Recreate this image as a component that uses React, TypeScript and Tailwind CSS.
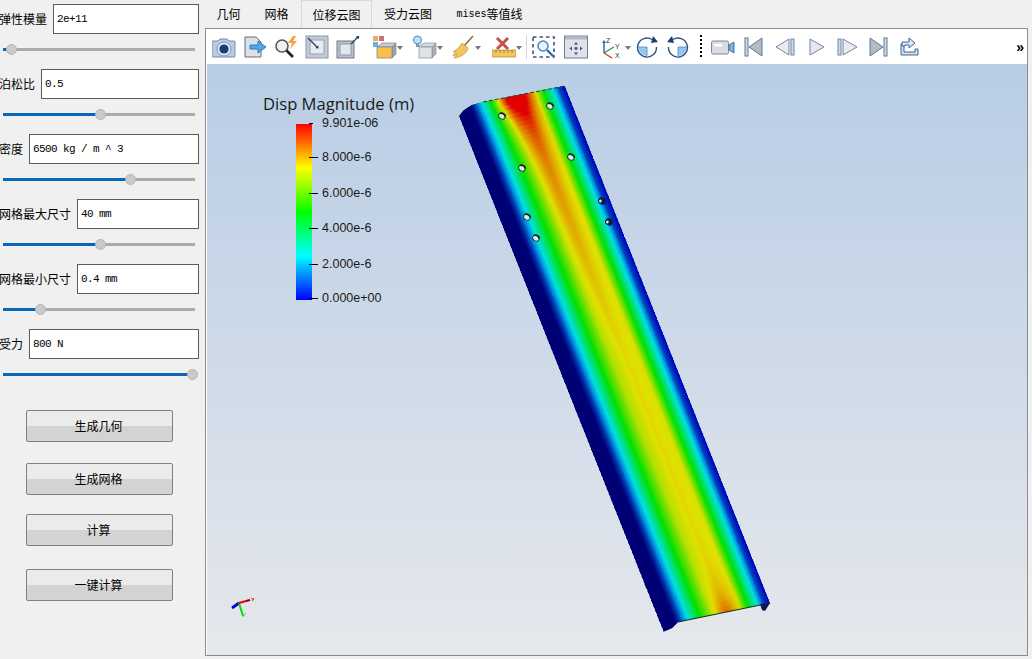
import type { ReactNode } from 'react';

const params = [
  { label: '弹性模量', value: '2e+11', pos: 8.5 },
  { label: '泊松比', value: '0.5', pos: 97 },
  { label: '密度', value: '6500 kg / m ^ 3', pos: 127 },
  { label: '网格最大尺寸', value: '40 mm', pos: 97 },
  { label: '网格最小尺寸', value: '0.4 mm', pos: 37.5 },
  { label: '受力', value: '800 N', pos: 189.5 },
];

const legendTicks = [
  { label: '9.901e-06', y: 59, tick: 'w-[4px]' },
  { label: '8.000e-6', y: 93, tick: 'w-[9px]' },
  { label: '6.000e-6', y: 129, tick: 'w-[9px]' },
  { label: '4.000e-6', y: 164, tick: 'w-[9px]' },
  { label: '2.000e-6', y: 200, tick: 'w-[9px]' },
  { label: '0.000e+00', y: 234, tick: 'w-[9px]' },
];

const holes = [
  { x: 502, y: 116, dark: false },
  { x: 550, y: 106, dark: false },
  { x: 522, y: 168, dark: false },
  { x: 571, y: 157, dark: false },
  { x: 527, y: 217, dark: false },
  { x: 536, y: 238, dark: false },
  { x: 602, y: 201, dark: true },
  { x: 609, y: 222, dark: true },
];

// value across the beam width, t = 0 left edge .. 1 right edge
const profile: [number, number][] = [
  [0, 0], [0.13, 0], [0.2, 0.14], [0.26, 0.27], [0.36, 0.5], [0.48, 0.7], [0.6, 0.76], [0.72, 0.74],
  [0.8, 0.5], [0.89, 0.25], [0.95, 0.08], [1, 0],
];

const lerpProfile = (t: number) => {
  for (let i = 1; i < profile.length; i++) {
    if (t <= profile[i][0]) {
      const [a, va] = profile[i - 1];
      const [b, vb] = profile[i];
      return va + ((t - a) / (b - a)) * (vb - va);
    }
  }
  return 0;
};

const rainbow = (f: number): [number, number, number] => {
  const v = Math.min(1, Math.max(0, f)) * 4;
  if (v < 1) return [0, v * 255, 255];
  if (v < 2) return [0, 255, (2 - v) * 255];
  if (v < 3) return [(v - 2) * 255, 255, 0];
  return [255, (4 - v) * 255, 0];
};

const beamColor = (t: number, v: number) => {
  const d = Math.max(v, 0);
  const top = Math.exp(-(((t - 0.5) / 0.15) ** 2)) * Math.exp(-d / 0.05);
  const bottom = Math.exp(-(((t - 0.6) / (0.06 + (1 - Math.min(v, 1)) * 0.9 + 0.03)) ** 2)) * Math.exp(-(1 - Math.min(v, 1)) / 0.035);
  const ridge = Math.exp(-(((t - 0.6 + d * 0.1) / 0.09) ** 2)) * Math.max(0, 0.5 - v) * 0.22;
  const base = lerpProfile(t);
  const f = base + ridge + (base > 0.1 ? 0.34 * top + 0.15 * bottom : 0);
  let shade = 0.88;
  if (t < 0.13) shade = 0.46;
  else if (t < 0.2) shade = 0.46 + ((t - 0.13) / 0.07) * 0.36;
  else if (t > 0.93) shade = 0.74;
  const [r, g, b] = rainbow(f);
  return `rgb(${Math.round(r * shade)},${Math.round(g * shade)},${Math.round(b * shade)})`;
};

const COLS = 90;
const ROWS = 120;
const beamCells: { d: string; fill: string }[] = [];
for (let j = 0; j < ROWS; j++) {
  for (let i = 0; i < COLS; i++) {
    const u0 = i / COLS;
    const u1 = (i + 1) / COLS;
    const v0 = -0.03 + (j / ROWS) * 1.04;
    const v1 = -0.03 + ((j + 1) / ROWS) * 1.04;
    const p = (u: number, v: number) =>
      `${(459 + u * 106 + v * 205).toFixed(1)} ${(116 - u * 29 + v * 516).toFixed(1)}`;
    beamCells.push({
      d: `M${p(u0, v0)}L${p(u1, v0)}L${p(u1, v1)}L${p(u0, v1)}Z`,
      fill: beamColor((u0 + u1) / 2, (v0 + v1) / 2),
    });
  }
}

const Ico = ({ className, children }: { className: string; children: ReactNode }) => (
  <svg width={24} height={24} viewBox="0 0 24 24" className={`shrink-0 ${className}`}>
    {children}
  </svg>
);

const Caret = () => (
  <svg width={6} height={4} viewBox="0 0 6 4" className="mt-[2px] shrink-0">
    <path d="M0 0H6L3 4Z" fill="#777" />
  </svg>
);

const Beam = () => (
  <svg viewBox="207 64 820 591" className="absolute inset-0 h-full w-full">
    <defs>
      <clipPath id="beamOutline">
        <path d="M459 116 464 110 472 105 483 102 565 86 770 603 678 622 672 628 663 632Z" />
      </clipPath>
    </defs>
    <g clipPath="url(#beamOutline)" shapeRendering="crispEdges">
      {beamCells.map((c, i) => (
        <path key={i} d={c.d} fill={c.fill} stroke={c.fill} strokeWidth={0.5} />
      ))}
    </g>
    <path d="M483 102 565 86" stroke="#1c2c40" strokeWidth={0.9} strokeDasharray="4 2" fill="none" />
    <path d="M678 622 770 603" stroke="#15301f" strokeWidth={1.2} fill="none" />
    <path d="M760 604 770 603 765 611 762 610Z" fill="#0a1a50" />
    {holes.map((h, i) => (
      <g key={i} transform={`rotate(30 ${h.x} ${h.y})`}>
        <ellipse cx={h.x} cy={h.y} rx={3.4} ry={3} fill={h.dark ? '#0a1a50' : '#dfe8ee'} stroke={h.dark ? '#0a1840' : '#16402c'} strokeWidth={1} />
        <path d={`M${h.x - 3} ${h.y - 1}A3.4 3 0 0 1 ${h.x + 3} ${h.y - 1}`} fill="none" stroke="#0c2a20" strokeWidth={1.6} />
        {h.dark && <ellipse cx={h.x - 1.4} cy={h.y + 0.8} rx={1.3} ry={1.5} fill="#dfe8f0" />}
      </g>
    ))}
    {/* axes widget */}
    <path d="M239 603 232 608" stroke="#0000e0" strokeWidth={2.8} />
    <path d="M239 603 243 616" stroke="#00e000" strokeWidth={2} />
    <path d="M239 603 246 601" stroke="#f00000" strokeWidth={2} />
    <path d="M246 601 250 600" stroke="#900000" strokeWidth={2.2} />
    <path d="M251 598 254 600M254 598 252 601" stroke="#f03030" strokeWidth={1} />
    <path d="M243 617 246 613" stroke="#30d030" strokeWidth={0.8} />
  </svg>
);

const Slider = ({ pos }: { pos: number }) => (
  <div className="flex h-[30px] items-center pl-[3px] pr-[10px]">
    <div className="relative h-[3px] w-full bg-[#ababab]">
      <div className="h-full bg-[#0a66b8]" style={{ width: pos }} />
      <div
        className="absolute top-[-4px] h-[11px] w-[11px] rounded-full border border-[#b4b4b4] bg-[#cacaca]"
        style={{ left: pos - 5.5 }}
      />
    </div>
  </div>
);

const ParamRow = ({ label, value, pos }: { label: string; value: string; pos: number }) => (
  <div className="mb-[5px]">
    <div className="ml-[-1px] mr-[6px] flex h-[30px] items-center gap-[6px]">
      <span className="whitespace-nowrap text-[12px] leading-none text-black">{label}</span>
      <input
        readOnly
        defaultValue={value}
        className="h-[30px] w-0 flex-1 border border-[#5a5a5a] bg-white px-[3px] font-['Liberation_Mono',monospace] text-[11px] tracking-[-0.6px] text-black outline-none"
      />
    </div>
    <Slider pos={pos} />
  </div>
);

const ActionButton = ({ label, className }: { label: string; className: string }) => (
  <button
    className={`ml-[26px] flex h-[32px] w-[147px] items-center justify-center rounded-[2px] border border-[#808080] bg-[linear-gradient(#ebebeb_50%,#d3d3d3_50%)] pr-[2px] text-[12px] text-black ${className}`}
  >
    {label}
  </button>
);

const Toolbar = () => (
  <div className="flex h-[35px] shrink-0 items-center bg-white">
    {/* camera */}
    <Ico className="ml-[6px]">
      <path d="M1 6h5l2-2h7l2 2h5a1 1 0 0 1 1 1v14a1 1 0 0 1-1 1H1a1 1 0 0 1-1-1V7a1 1 0 0 1 1-1Z" fill="#b8cbe3" stroke="#6f8fb8" />
      <circle cx={12} cy={14} r={7} fill="#dfe8f3" stroke="#7f98bd" />
      <circle cx={12} cy={14} r={4.6} fill="#1d3a75" />
    </Ico>
    {/* save data */}
    <Ico className="ml-[8px]">
      <path d="M1 2h11l5 5v15H1Z" fill="#dde0e5" stroke="#666c78" />
      <path d="M6 10h8V6l8 6-8 6v-4H6Z" fill="#4fa8e8" stroke="#2b7cc0" />
    </Ico>
    {/* find data */}
    <Ico className="ml-[6px]">
      <circle cx={8} cy={11} r={6} fill="#eef1f4" stroke="#555" strokeWidth={1.6} />
      <path d="M12.5 15.5 19 22" stroke="#222" strokeWidth={2.6} />
      <path d="M19 1l-5 7h4l-2 6 7-8h-4l3-5Z" fill="#f2a33a" />
    </Ico>
    {/* reset view */}
    <Ico className="ml-[7px]">
      <rect x={1} y={1} width={22} height={22} fill="#c3cad4" stroke="#8b98ab" />
      <rect x={5} y={5} width={14} height={14} fill="#e8ebef" stroke="#9aa4b2" />
      <path d="M3 3 12 12" stroke="#27405f" strokeWidth={1.3} />
      <rect x={11} y={11} width={2.4} height={2.4} fill="#27405f" />
    </Ico>
    {/* zoom to box */}
    <Ico className="ml-[7px]">
      <rect x={1} y={6} width={17} height={17} fill="#b9c0ca" stroke="#707b8c" />
      <rect x={4} y={9} width={11} height={11} fill="#e4e7ec" stroke="#8f99a8" />
      <path d="M15 9 22 2" stroke="#27405f" strokeWidth={1.3} />
      <rect x={20.5} y={1} width={2.6} height={2.6} fill="#27405f" />
    </Ico>
    {/* color cube */}
    <Ico className="ml-[13px]">
      <rect x={0} y={1} width={5} height={5} fill="#f0a860" />
      <rect x={6} y={1} width={5} height={5} fill="#d07078" />
      <rect x={0} y={7} width={5} height={5} fill="#6ab0e8" />
      <path d="M4 12l5-4h14l-4 4Z" fill="#c8ccd4" stroke="#7e8794" strokeWidth={0.7} />
      <path d="M19 12l4-4v11l-4 4Z" fill="#9aa2ae" stroke="#7e8794" strokeWidth={0.7} />
      <rect x={4} y={12} width={15} height={11} fill="#f6c04a" stroke="#7e8794" strokeWidth={0.8} />
    </Ico>
    <Caret />
    {/* light cube */}
    <Ico className="ml-[10px]">
      <circle cx={4.5} cy={5} r={4} fill="#bfe0f6" stroke="#3f8cc8" />
      <rect x={3} y={9} width={3} height={3} fill="#8a95a4" />
      <path d="M6 11l5-3h12l-4 4Z" fill="#d6dae0" stroke="#8d96a3" strokeWidth={0.7} />
      <path d="M19 12l4-4v11l-4 4Z" fill="#a8afba" stroke="#8d96a3" strokeWidth={0.7} />
      <rect x={6} y={12} width={13} height={11} fill="#dfe3e8" stroke="#8d96a3" strokeWidth={0.8} />
    </Ico>
    <Caret />
    {/* broom */}
    <Ico className="ml-[8px]">
      <path d="M22 1 13 11" stroke="#9a6a3a" strokeWidth={1.6} />
      <path d="M11 8l6 5c-1 5-6 9-14 10l3-4-4 2 3-5-3 1c3-2 7-5 9-9Z" fill="#f4c45c" stroke="#c49530" strokeWidth={0.7} />
    </Ico>
    <Caret />
    {/* ruler delete */}
    <Ico className="ml-[11px]">
      <path d="M5 3l11 11M16 3 5 14" stroke="#c85048" strokeWidth={3} />
      <rect x={0} y={15} width={24} height={7} fill="#f0c860" stroke="#b08a30" strokeWidth={0.7} />
      <path d="M4 15v3M8 15v3M12 15v3M16 15v3M20 15v3" stroke="#8a6a20" strokeWidth={0.8} />
    </Ico>
    <Caret />
    <div className="ml-[4px] h-[24px] w-px shrink-0 bg-[#d8d8d8]" />
    {/* zoom selection */}
    <Ico className="ml-[5px]">
      <rect x={1} y={2} width={21} height={20} fill="none" stroke="#3a5580" strokeWidth={1.6} strokeDasharray="3.5 3" />
      <circle cx={11} cy={11} r={5} fill="#eaf3fb" stroke="#4d86bb" strokeWidth={1.5} />
      <path d="M15 15 21 21" stroke="#2f6aa6" strokeWidth={2.4} />
    </Ico>
    {/* zoom to fit */}
    <Ico className="ml-[8px]">
      <rect x={0.5} y={1} width={23} height={22} fill="#dfe2e8" stroke="#6f7f98" />
      <rect x={1} y={1.5} width={22} height={3} fill="#aeb9c9" />
      <path d="M12 7l2 2.5h-4ZM12 20l2-2.5h-4ZM5.5 13.5 8 11.5v4ZM18.5 13.5 16 11.5v4Z" fill="#37506f" />
      <circle cx={12} cy={13.5} r={1.4} fill="#37506f" />
    </Ico>
    {/* axes */}
    <Ico className="ml-[13px]">
      <path d="M3 18V7" stroke="#2b62b0" strokeWidth={1.4} />
      <path d="M3 5l2 3H1Z" fill="#2b62b0" />
      <path d="M3 18 13 12" stroke="#2a9a50" strokeWidth={1.4} />
      <path d="M3 18 11 23" stroke="#d83030" strokeWidth={1.4} />
      <text x={5} y={8} fontSize={7} fill="#333" fontFamily="Liberation Sans">Z</text>
      <text x={14} y={14} fontSize={7} fill="#333" fontFamily="Liberation Sans">Y</text>
      <text x={14} y={23} fontSize={7} fill="#333" fontFamily="Liberation Sans">X</text>
    </Ico>
    <Caret />
    {/* rotate cw */}
    <Ico className="ml-[4px]">
      <path d="M3 12h9v9a9.5 9.5 0 0 1-9-9Z" fill="#8fc8f0" />
      <path d="M3 12h9v9" fill="none" stroke="#4f86b8" strokeWidth={0.8} />
      <path d="M17 4.5A9.5 9.5 0 1 0 21.5 12" fill="none" stroke="#2f5580" strokeWidth={1.4} />
      <path d="M23 7l-7 1 2-7Z" fill="#1f3f68" />
    </Ico>
    {/* rotate ccw */}
    <Ico className="ml-[7px]">
      <path d="M12 12h9a9.5 9.5 0 0 1-9 9Z" fill="#8fc8f0" />
      <path d="M21 12h-9v9" fill="none" stroke="#4f86b8" strokeWidth={0.8} />
      <path d="M7 4.5A9.5 9.5 0 1 1 2.5 12" fill="none" stroke="#2f5580" strokeWidth={1.4} />
      <path d="M1 7l7 1-2-7Z" fill="#1f3f68" />
    </Ico>
    <div className="ml-[10px] h-[23px] w-[2px] shrink-0 bg-[repeating-linear-gradient(#000_0_2px,transparent_2px_4px)]" />
    {/* record */}
    <Ico className="ml-[9px]">
      <rect x={0.5} y={6} width={17} height={13} rx={1.5} fill="#d8dde4" stroke="#7d8ca0" />
      <rect x={3} y={9} width={8} height={2.5} fill="#fff" />
      <path d="M18 10l5-3v11l-5-3Z" fill="#7fb0d8" stroke="#4f6f90" />
    </Ico>
    {/* first frame */}
    <Ico className="ml-[7px]">
      <rect x={3} y={3} width={3} height={18} fill="#d4d9e0" stroke="#5f7896" />
      <path d="M20 3v18L7 12Z" fill="#b4bbc5" stroke="#5f7896" />
    </Ico>
    {/* previous frame */}
    <Ico className="ml-[7px]">
      <path d="M16 4v16L3 12Z" fill="#e8ebf0" stroke="#6f88a8" />
      <rect x={18} y={4} width={3} height={16} fill="#d4d9e0" stroke="#6f88a8" />
    </Ico>
    {/* play */}
    <Ico className="ml-[8px]">
      <path d="M5 4v16l14-8Z" fill="#e4e8ee" stroke="#6f88a8" />
    </Ico>
    {/* next frame */}
    <Ico className="ml-[6px]">
      <rect x={3} y={4} width={3} height={16} fill="#d4d9e0" stroke="#6f88a8" />
      <path d="M8 4v16l14-8Z" fill="#e8ebf0" stroke="#6f88a8" />
    </Ico>
    {/* last frame */}
    <Ico className="ml-[7px]">
      <path d="M4 3v18l13-9Z" fill="#b4bbc5" stroke="#5f7896" />
      <rect x={18} y={3} width={3} height={18} fill="#d4d9e0" stroke="#5f7896" />
    </Ico>
    {/* loop */}
    <Ico className="ml-[7px]">
      <path d="M4 9v11h17v-6h-3v3H7V9Z" fill="#d2deed" stroke="#3f679a" />
      <path d="M5 11V7h7V3l6 5-6 5v-3H8v1Z" fill="#dbe6f2" stroke="#3f679a" />
    </Ico>
    <span className="ml-auto mr-[3px] font-['Liberation_Sans',sans-serif] text-[14px] font-bold leading-none text-black">»</span>
  </div>
);

const tabs = [
  { label: '几何', width: 'w-[47px]' },
  { label: '网格', width: 'w-[49px]' },
  { label: '位移云图', width: 'w-[71px]', active: true },
  { label: '受力云图', width: 'w-[72px]' },
];

export default function App() {
  return (
    <div className="flex h-[659px] w-[1032px] overflow-hidden bg-[#f0f0f0] font-['Noto_Sans_CJK_SC',sans-serif]">
      <aside className="w-[205px] shrink-0 overflow-hidden pt-[4px]">
        {params.map((p) => (
          <ParamRow key={p.label} {...p} />
        ))}
        <div className="pt-[16px]">
          <ActionButton label="生成几何" className="mb-[21px]" />
          <ActionButton label="生成网格" className="mb-[19px]" />
          <ActionButton label="计算" className="mb-[23px]" />
          <ActionButton label="一键计算" className="" />
        </div>
      </aside>

      <main className="flex w-[823px] shrink-0 flex-col">
        <div className="flex h-[28px] shrink-0 text-[12px] text-black">
          {tabs.map((t) => (
            <div
              key={t.label}
              className={`flex items-center justify-center ${t.width} ${t.active ? 'border border-b-0 border-[#d9d9d9]' : ''}`}
            >
              {t.label}
            </div>
          ))}
          <div className="flex w-[91px] items-center justify-center">
            <span className="font-['Liberation_Mono',monospace] text-[10px]">mises</span>等值线
          </div>
        </div>
        <div className="flex h-[628px] flex-col border border-[#8c8c8c] bg-white">
          <Toolbar />
          <div className="relative ml-px flex-1 overflow-hidden bg-[linear-gradient(#b8cde5,#e6e8ec)]">
            <Beam />
            {/* scalar bar */}
            <div className="absolute left-[56px] top-[30px] whitespace-nowrap font-['Open_Sans',sans-serif] text-[16.6px] leading-[20px] text-[#1a1a1a]">
              Disp Magnitude (m)
            </div>
            <div className="absolute left-[89px] top-[60px] h-[176px] w-[16px] bg-[linear-gradient(to_top,#0000ff,#00ffff_25%,#00ff00_50%,#ffff00_75%,#ff0000)]" />
            {legendTicks.map((t) => (
              <div key={t.label} className="absolute left-[102px] flex h-[14px] items-center" style={{ top: t.y - 7 }}>
                <div className={`h-px bg-black ${t.tick}`} />
              </div>
            ))}
            {legendTicks.map((t) => (
              <div
                key={t.label}
                className="absolute left-[115px] font-['Liberation_Sans',sans-serif] text-[12.5px] leading-[14px] text-[#1a1a1a]"
                style={{ top: t.y - 7 }}
              >
                {t.label}
              </div>
            ))}
          </div>
        </div>
      </main>
    </div>
  );
}
